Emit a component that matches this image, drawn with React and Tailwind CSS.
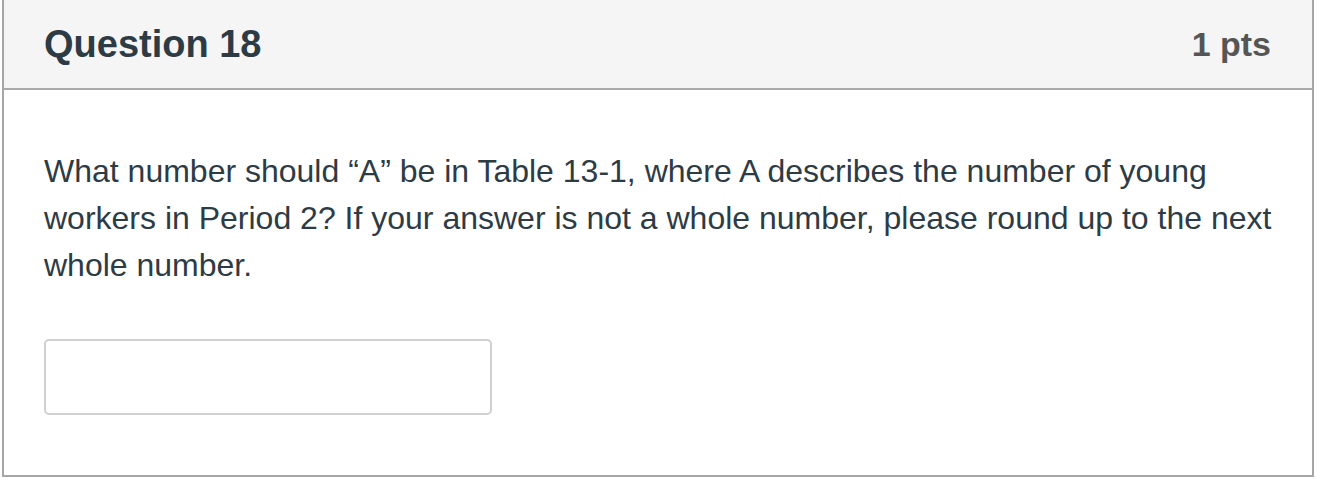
export default function App() {
  return (
    <div className="min-h-screen bg-white pl-[2px] pr-[4px]" style={{ fontFamily: '"Liberation Sans", Arial, sans-serif' }}>
      <div className="border-x-2 border-b-2 border-[#a6a6a6] bg-white">
        <div className="flex h-[90px] items-center justify-between border-b-2 border-[#ababab] bg-[#f5f5f5] pl-[40px] pr-[41px]">
          <h2 className="text-[38px] font-bold leading-none text-[#2d3b45]">Question 18</h2>
          <div className="text-[34px] font-bold leading-none text-[#555555]">1 pts</div>
        </div>
        <div className="pl-[40px] pr-[40px] pt-[58px] pb-[60px]">
          <p className="text-[32px] leading-[47px] text-[#2d3b45]">
            What number should “A” be in Table 13-1, where A describes the number of young workers in Period 2? If your answer is not a whole number, please round up to the next whole number.
          </p>
          <input
            type="text"
            className="mt-[50px] block h-[76px] w-[448px] rounded-[5px] border-2 border-[#d0d0d0] bg-white px-3 text-[28px] text-[#2d3b45] outline-none"
          />
        </div>
      </div>
    </div>
  );
}
